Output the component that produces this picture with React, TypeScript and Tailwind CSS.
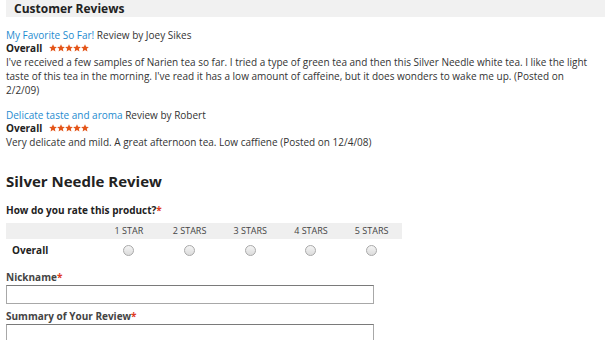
import React from "react";

const Stars = () => (
  <span className="inline-flex ml-[7px] relative top-[-1px]">
    {[0, 1, 2, 3, 4].map((i) => (
      <svg key={i} width="8" height="8" viewBox="0 0 24 24">
        <path
          d="M12 0.5l3.4 7.6 8.2.8-6.2 5.5 1.8 8.1L12 18.3l-7.2 4.2 1.8-8.1L.4 8.9l8.2-.8z"
          fill="#e4561a"
        />
      </svg>
    ))}
  </span>
);

const Radio = () => (
  <div className="w-[11px] h-[11px] rounded-full border border-[#a9a9a9] bg-gradient-to-b from-[#f4f4f4] to-[#dcdcdc] mx-auto" />
);

export default function App() {
  const cols = ["1 STAR", "2 STARS", "3 STARS", "4 STARS", "5 STARS"];
  return (
    <div
      className="w-[611px] h-[340px] overflow-hidden bg-white text-[#333] text-[10px] leading-[14px]"
      style={{ fontFamily: '"Open Sans", "DejaVu Sans", sans-serif' }}
    >
      <div className="mx-[6px] bg-[#f1f1f1] h-[17px] pl-[8px] text-[12px] font-bold leading-[17px] text-[#222]">
        Customer Reviews
      </div>
      <div className="px-[6px] pt-[12px]">
        <div className="leading-[13px]">
          <span className="text-[#1e8bd0]">My Favorite So Far!</span> Review by Joey Sikes
        </div>
        <div className="leading-[13px] font-bold flex items-center text-[#222]">
          Overall <Stars />
        </div>
        <div className="pr-[16px]">
          I've received a few samples of Narien tea so far. I tried a type of green tea and then this Silver Needle white tea. I like the light taste of this tea in the morning. I've read it has a low amount of caffeine, but it does wonders to wake me up. (Posted on 2/2/09)
        </div>
        <div className="mt-[12px] leading-[13px]">
          <span className="text-[#1e8bd0]">Delicate taste and aroma</span> Review by Robert
        </div>
        <div className="leading-[13px] font-bold flex items-center text-[#222]">
          Overall <Stars />
        </div>
        <div>Very delicate and mild. A great afternoon tea. Low caffiene (Posted on 12/4/08)</div>

        <div className="mt-[23px] text-[15px] font-bold leading-[18px] text-[#222]">Silver Needle Review</div>
        <div className="mt-[13px] font-bold text-[#222]">
          How do you rate this product?<span className="text-[#e03c1f]">*</span>
        </div>
        <div className="mt-[6px] w-[396px]">
          <div className="flex bg-[#efefef] h-[16px] items-center text-[9px] text-[#444]">
            <div className="w-[93px]" />
            {cols.map((c) => (
              <div key={c} className="w-[61px] text-center">
                {c}
              </div>
            ))}
          </div>
          <div className="flex h-[22px] items-center">
            <div className="w-[93px] pl-[6px] font-bold text-[#222]">Overall</div>
            {cols.map((c) => (
              <div key={c} className="w-[61px]">
                <Radio />
              </div>
            ))}
          </div>
        </div>
        <div className="mt-[9px] font-bold text-[#444]">
          Nickname<span className="text-[#e03c1f]">*</span>
        </div>
        <div className="mt-[1px] w-[368px] h-[19px] border border-[#a8a8a8] border-t-[#7a7a7a] bg-white" />
        <div className="mt-[5px] font-bold text-[#444]">
          Summary of Your Review<span className="text-[#e03c1f]">*</span>
        </div>
        <div className="mt-[1px] w-[368px] h-[19px] border border-[#a8a8a8] border-t-[#7a7a7a] bg-white" />
      </div>
    </div>
  );
}
